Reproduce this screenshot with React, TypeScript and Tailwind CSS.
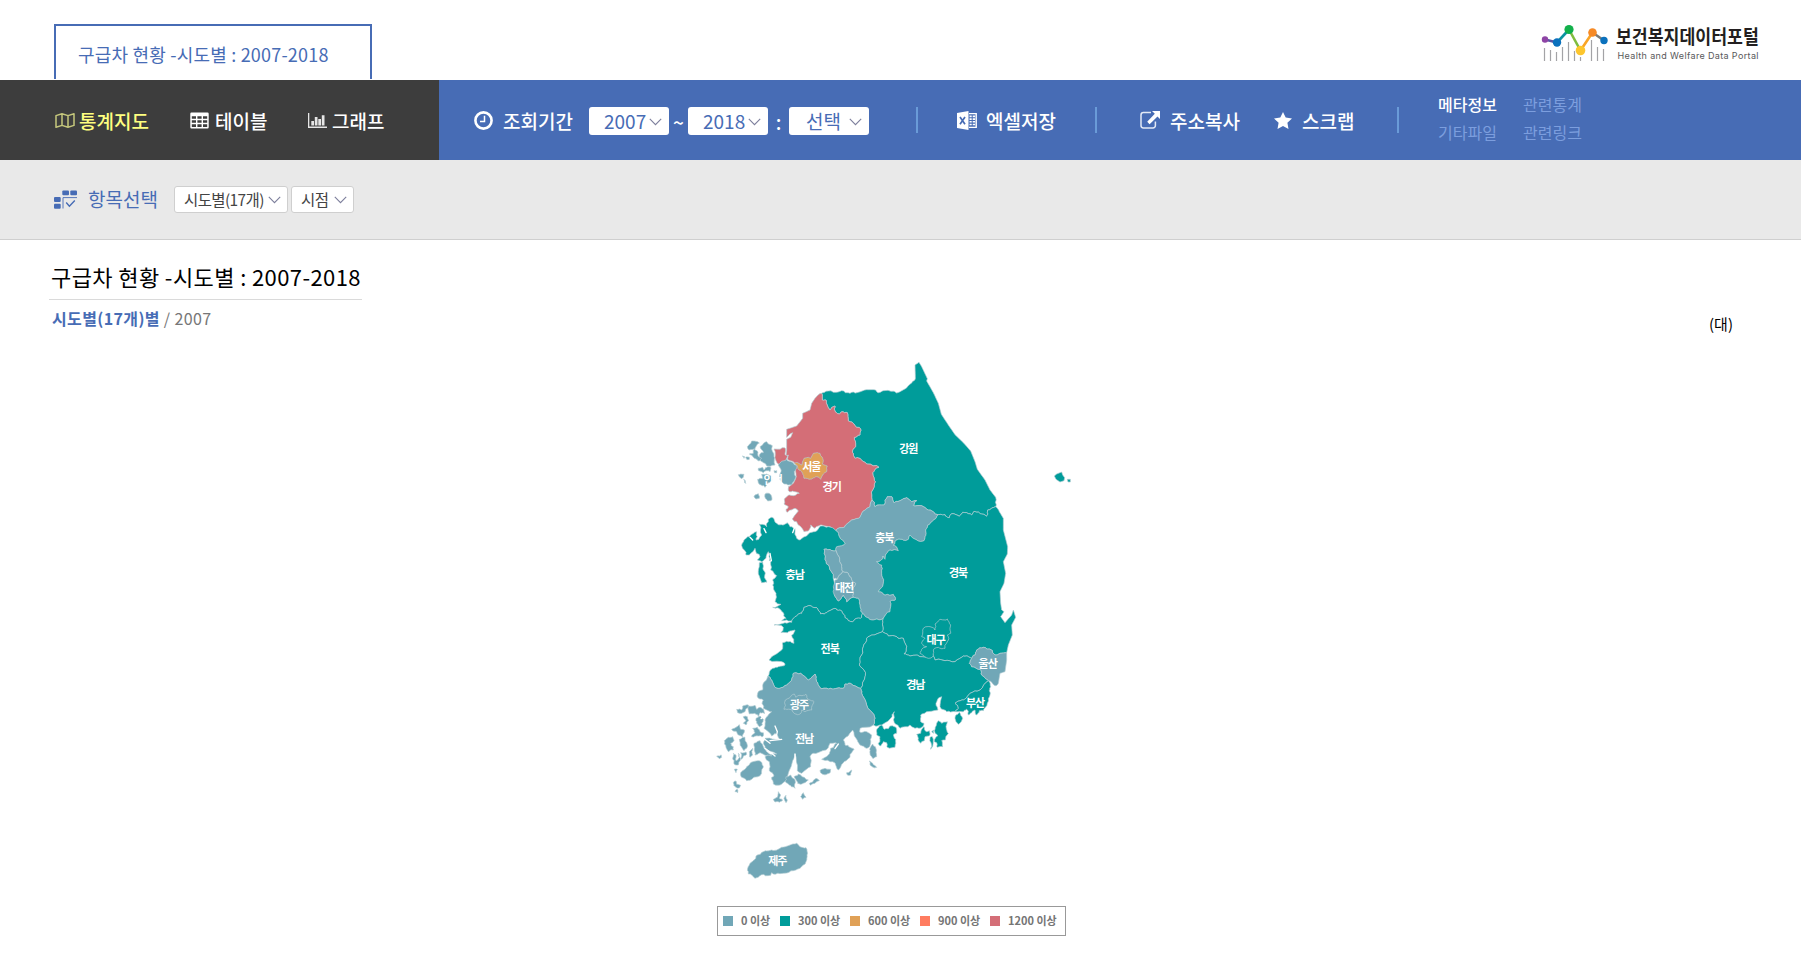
import React from 'react';

type Pt = [number, number];

const pts = (s: string): Pt[] =>
  s.trim().split(/\s+/).map((p) => p.split(',').map(Number) as Pt);
const rev = (s: string): string => s.trim().split(/\s+/).reverse().join(' ');

/* Pseudo-random value that is the same for an edge in either direction. */
const noise = (a: Pt, b: Pt, k: number): number => {
  const v = Math.sin((a[0] + b[0]) * 12.9898 + (a[1] + b[1]) * 78.233 + k * 37.7) * 43758.5453;
  return v - Math.floor(v) - 0.5;
};

/* Splits an edge and shifts its middle to give a rough coastline. */
const split = (a: Pt, b: Pt, depth: number): Pt[] => {
  const len = Math.hypot(b[0] - a[0], b[1] - a[1]);
  if (depth === 0 || len < 7) return [a];
  const mx = (a[0] + b[0]) / 2;
  const my = (a[1] + b[1]) / 2;
  /* The east coast and the north-west shore of Gyeonggi are even. */
  const even = (mx > 640 && my < 445 && mx - 640 > (my - 60) * 0.5) || mx > 895 || (mx < 350 && my < 325 && mx > 258);
  const amp = even ? 0 : Math.min(len * 0.35, 6);
  const m: Pt = [mx + noise(a, b, 1) * amp, my + noise(a, b, 2) * amp];
  return [...split(a, m, depth - 1), ...split(m, b, depth - 1)];
};

const outline = (s: string, rough: boolean): string => {
  const p = pts(s);
  const out = p.flatMap((a, i) => (rough ? split(a, p[(i + 1) % p.length], 2) : [a]));
  return 'M' + out.map(([x, y]) => `${x.toFixed(1)},${y.toFixed(1)}`).join('L') + 'Z';
};

const BLUE = '#71a7b7';
const TEAL = '#009c9a';
const AMBER = '#e0a157';
const CORAL = '#ff7c60';
const ROSE = '#d46e77';

/* Borders shared by two provinces */
const ggGw =
  '365,130 367,150 378,150 382,165 390,180 405,168 405,183 418,192 425,185 442,188 445,213 462,222 482,237 480,255 463,262 467,290 458,300 465,325 480,325 500,342 537,352 518,368 526,395 518,420 516,450';
const ggCb = '516,450 510,470 485,490 480,502 455,510 437,525 425,533 408,542';
const cbGw =
  '516,450 525,470 552,465 555,450 562,440 575,440 582,458 600,452 620,443 635,455 650,452 640,466 665,467 685,480 715,494';
const gbGw =
  '715,494 735,494 748,503 756,491 768,494 778,499 788,487 805,491 815,495 822,484 835,486 845,492 860,499 863,480 875,474 888,470';
const cbGb =
  '715,494 708,505 690,520 680,535 675,560 672,572 655,573 630,555 625,568 600,568 585,575 580,585 595,602 570,600 558,612 555,628 548,618 544,630 530,635 545,645 545,670 550,700 535,725 555,735 580,733 586,750 570,755 570,785 550,805';
const cnEast =
  '408,542 418,560 435,580 410,590 408,602 390,598 372,598 375,628 388,650 400,685 403,735 415,753 425,742 430,735 440,755 460,742 475,745 480,770 487,790';
const cnJb =
  '487,790 485,802 470,805 458,815 445,812 430,792 420,780 405,775 380,788 362,792 350,773 330,767 312,772 305,790 285,800 275,813';
const jbGn =
  '548,845 520,855 500,865 490,890 485,915 478,945 492,960 495,980 482,1015';
const jbJn =
  '482,1015 455,1002 435,1002 430,1015 400,1017 385,1017 362,1015 350,995 345,972 325,990 302,970 280,970 275,990 260,1005 240,1015 225,1012 215,990 203,980';
const gnGb =
  '815,925 805,920 790,918 765,935 735,932 705,930 698,912 690,920 660,920 625,915 612,912 620,890 610,865 590,860 565,858 548,845';
const gbUs = '920,908 900,910 885,915 875,900 850,892 830,900 825,915 815,925';
const usGn = '815,925 808,940 815,950 840,958 845,975 865,992';
const gnBs = '865,992 840,1020 810,1030 790,1050 765,1060 775,1075 765,1085';
const jnGn = '482,1015 485,1030 500,1065 525,1105 520,1125';

const regions: { c: string; p: string; smooth?: boolean }[] = [
  {
    c: TEAL,
    p: `${rev(ggGw)} 385,123 400,127 425,122 450,130 475,127 500,119 527,120 535,128 550,122 590,129 625,107 642,92 646,80 645,45 657,37 665,50 682,86 680,93 700,128 715,160 724,193 745,225 765,254 790,278 812,303 825,335 832,358 855,390 870,420 887,442 ${rev(gbGw)} ${rev(cbGw)}`,
  },
  {
    c: ROSE,
    p: `${ggGw} ${ggCb} 390,530 365,525 345,535 332,525 325,543 312,545 295,525 290,515 277,507 295,483 285,475 262,487 258,478 265,470 252,462 253,447 268,435 280,437 298,430 285,425 268,425 265,410 280,400 288,375 283,352 290,345 280,335 262,328 265,315 258,318 260,300 260,268 272,262 278,248 270,252 260,262 260,238 290,228 308,205 308,190 330,180 335,160 345,145`,
  },
  { c: ROSE, p: '222,297 253,293 257,300 255,314 263,318 258,330 238,344 228,332' },
  {
    c: BLUE,
    p: `${rev(ggCb)} ${cbGw} ${cbGb} 520,810 500,802 487,790 480,770 475,745 460,742 458,720 467,700 455,690 445,670 428,665 425,645 408,602 410,590 435,580 418,560`,
  },
  {
    c: TEAL,
    p: `${cnEast} ${cnJb} 245,812 258,805 250,788 240,778 218,772 243,763 225,755 228,730 218,705 218,690 230,677 212,660 215,630 208,632 205,605 198,625 185,635 172,630 180,620 165,595 150,613 138,615 135,603 127,593 132,570 148,560 170,545 168,570 185,555 178,522 200,530 205,508 215,502 230,520 248,525 262,518 270,530 285,535 290,565 300,570 325,552 345,545 362,528 385,530`,
  },
  { c: TEAL, p: '178,638 188,636 190,650 194,665 198,690 200,697 185,698 175,672' },
  {
    c: TEAL,
    p: `${rev(cnJb)} 500,802 520,810 550,805 548,825 548,845 ${jbGn} ${jbJn} 218,955 235,950 255,945 250,937 207,930 215,920 245,900 248,878 260,874 282,880 275,855 285,840 262,848 243,848 250,832 222,825 250,820 275,817`,
  },
  {
    c: TEAL,
    p: `${gbGw} 898,485 910,505 910,540 923,590 922,612 910,635 917,670 912,700 900,725 902,760 905,780 912,785 902,800 915,818 935,795 940,780 947,802 935,825 937,855 925,885 ${gbUs} ${gnGb} 548,825 ${rev(cbGb)}`,
  },
  {
    c: TEAL,
    p: `${usGn} ${gnBs} 740,1085 720,1070 725,1040 712,1050 708,1060 714,1080 680,1085 662,1095 662,1115 672,1120 668,1130 645,1135 630,1125 600,1135 583,1118 583,1085 572,1105 545,1125 520,1125 ${rev(jnGn)} ${rev(jbGn)} ${rev(gnGb)}`,
  },
  { c: TEAL, p: `${gnBs} 790,1085 800,1078 805,1095 815,1088 825,1080 830,1095 838,1082 850,1082 862,1060 870,1035 868,1022 872,1010` },
  { c: BLUE, p: `${gbUs} ${usGn} 885,1007 895,1000 900,970 915,965 920,930` },
  {
    c: BLUE,
    p: `${rev(jbJn)} ${jnGn} 480,1135 479,1146 500,1145 515,1155 512,1180 500,1195 480,1185 468,1165 458,1140 430,1170 435,1185 450,1192 462,1198 450,1222 430,1238 415,1260 398,1235 365,1228 385,1215 392,1195 410,1180 390,1180 378,1200 340,1210 330,1220 332,1250 305,1270 292,1262 285,1212 278,1232 262,1290 240,1305 220,1302 215,1282 222,1275 208,1262 208,1235 195,1220 230,1212 200,1200 190,1180 195,1165 240,1168 225,1150 215,1158 192,1135 195,1110 215,1085 190,1075 186,1060 190,1050 172,1040 180,1022 188,1020 190,1000`,
  },
  // Metropolitan cities
  { c: AMBER, p: '283,340 293,338 305,345 312,325 325,322 332,325 340,310 360,310 368,325 367,342 382,348 380,365 370,372 362,388 350,380 335,387 312,385 308,370 297,360' },
  { c: BLUE, p: '235,345 260,328 280,338 290,352 283,365 288,380 275,405 262,404 248,398 240,385 243,365' },
  { c: BLUE, p: '372,598 390,598 408,602 425,645 428,665 412,688 400,685 388,650 375,628' },
  { c: BLUE, p: '405,690 412,688 428,665 445,670 455,690 467,700 458,720 460,742 440,755 430,735 425,742 415,753 403,735 400,710' },
  { c: TEAL, p: '665,860 670,835 690,830 705,840 705,822 720,808 742,807 752,825 752,850 742,855 745,870 735,895 715,892 700,900 698,920 685,925 660,910 665,898 680,890 665,880 675,865' },
  { c: BLUE, p: '256,1050 272,1040 283,1032 288,1042 300,1036 318,1033 325,1048 342,1055 335,1080 315,1085 305,1080 300,1092 285,1092 270,1078 252,1078' },
  // Jeju
  { c: BLUE, p: '143,1555 150,1540 165,1528 168,1518 190,1505 215,1500 240,1495 265,1487 290,1480 305,1492 318,1493 321,1515 318,1535 300,1555 280,1562 250,1570 220,1572 215,1568 212,1576 185,1574 165,1585 155,1575 145,1572' },
  // Incheon islands
  { c: BLUE, p: '180,290 200,275 205,282 217,287 222,320 225,345 200,348 190,338 178,325 178,315 190,308' },
  { c: BLUE, p: '142,290 155,273 178,279 165,297 147,300' },
  { c: BLUE, p: '163,297 172,303 174,318 185,325 178,333 163,325 148,312 160,310' },
  { c: BLUE, p: '137,322 148,322 148,328 140,328' },
  { c: BLUE, p: '127,318 134,320 132,325' },
  { c: BLUE, p: '175,355 188,352 192,360 203,350 213,353 210,365 198,362 190,368 176,362' },
  { c: BLUE, p: '173,388 188,385 185,373 200,372 215,378 215,392 205,398 195,412 183,405 175,398' },
  { c: BLUE, p: '222,362 230,362 230,368 224,368' },
  { c: BLUE, p: '115,374 132,373 130,382 124,386 118,380' },
  { c: BLUE, p: '131,388 136,392 138,400 134,398' },
  { c: BLUE, p: '162,440 175,431 178,445 168,447' },
  { c: BLUE, p: '195,432 207,430 215,440 213,452 203,453 196,445' },
  // Ulleungdo and Dokdo
  { c: TEAL, p: '1063,378 1070,372 1085,366 1088,375 1094,383 1092,392 1080,396 1068,388', smooth: true },
  { c: TEAL, p: '1102,388 1111,388 1111,396 1104,396', smooth: true },
  // South-east islands
  { c: TEAL, p: '530,1140 545,1125 553,1138 565,1136 570,1128 588,1132 590,1150 580,1155 587,1168 585,1192 562,1192 560,1178 550,1175 542,1188 535,1180 540,1160 530,1155' },
  { c: TEAL, p: '650,1153 662,1150 672,1130 680,1145 688,1142 690,1155 675,1160 673,1172 662,1180 655,1165' },
  { c: TEAL, p: '705,1138 715,1112 725,1120 742,1115 738,1130 745,1150 736,1170 725,1172 728,1190 712,1192 710,1178 703,1175 713,1158 705,1150' },
  { c: TEAL, p: '690,1162 697,1160 698,1190 692,1198 693,1178' },
  { c: TEAL, p: '766,1098 778,1087 788,1105 775,1123 768,1115' },
  { c: TEAL, p: '695,1145 702,1140 701,1150' },
  // South-west islands
  { c: BLUE, p: '122,1268 140,1250 150,1240 175,1232 186,1238 190,1250 185,1270 155,1288 140,1292 125,1282' },
  { c: BLUE, p: '162,1180 180,1172 190,1190 200,1205 215,1218 195,1216 180,1208 165,1215 163,1196' },
  { c: BLUE, p: '110,1078 125,1080 128,1068 145,1065 150,1072 138,1076 135,1085 125,1090 113,1088' },
  { c: BLUE, p: '145,1068 165,1066 170,1078 180,1072 192,1083 195,1090 180,1088 175,1100 165,1090 148,1092' },
  { c: BLUE, p: '130,1100 142,1100 146,1112 138,1125 130,1120 138,1112' },
  { c: BLUE, p: '168,1105 180,1098 190,1108 187,1125 178,1130 170,1120' },
  { c: BLUE, p: '95,1138 108,1132 118,1124 122,1138 133,1140 128,1160 115,1155 110,1145' },
  { c: BLUE, p: '158,1135 172,1132 180,1145 190,1148 188,1160 175,1158 155,1160 165,1148' },
  { c: BLUE, p: '118,1168 135,1162 140,1178 142,1190 132,1202 124,1190' },
  { c: BLUE, p: '73,1172 85,1162 98,1160 102,1172 92,1180 100,1190 100,1200 85,1205 78,1192' },
  { c: BLUE, p: '50,1219 64,1215 65,1222 58,1226' },
  { c: BLUE, p: '100,1210 108,1215 108,1232 118,1222 115,1210 122,1225 115,1245 102,1242 98,1225' },
  { c: BLUE, p: '122,1208 138,1206 140,1213 130,1218 124,1228' },
  { c: BLUE, p: '148,1205 158,1195 158,1215 150,1222' },
  { c: BLUE, p: '103,1258 112,1258 108,1268' },
  { c: BLUE, p: '100,1298 108,1293 110,1303 122,1306 118,1314 108,1312' },
  { c: BLUE, p: '105,1325 112,1318 113,1328' },
  { c: BLUE, p: '258,1280 272,1275 285,1290 285,1315 268,1305 256,1295' },
  { c: BLUE, p: '282,1280 295,1272 312,1282 325,1290 315,1298 300,1303 290,1293' },
  { c: BLUE, p: '328,1300 338,1296 348,1285 358,1292 345,1300 332,1306' },
  { c: BLUE, p: '360,1262 375,1255 392,1258 388,1270 368,1273' },
  { c: BLUE, p: '440,1268 455,1260 452,1275 444,1276' },
  { c: BLUE, p: '220,1348 232,1342 235,1325 242,1335 238,1345 248,1350 238,1357 225,1356' },
  { c: BLUE, p: '252,1345 258,1336 262,1350 258,1358' },
  { c: BLUE, p: '302,1340 310,1328 318,1342 308,1348' },
  { c: BLUE, p: '510,1195 518,1182 526,1190 530,1220 518,1225 510,1210' },
  { c: BLUE, p: '508,1233 518,1240 530,1252 518,1251 510,1243' },
];

const labels: [string, number, number][] = [
  ['강원', 626, 297], ['경기', 396, 411], ['서울', 335, 351], ['인천', 219, 389],
  ['충북', 554, 564], ['충남', 285, 673], ['대전', 433, 714], ['경북', 775, 667],
  ['전북', 390, 897], ['대구', 708, 869], ['울산', 864, 942], ['경남', 647, 1004],
  ['부산', 826, 1059], ['광주', 298, 1065], ['전남', 313, 1165], ['제주', 233, 1533],
];

const KoreaMap = () => (
  <svg viewBox="0 0 1200 1620" className="ml-[700px] block h-[540px] w-[400px]">
    {regions.map((r, i) => (
      <path key={i} d={outline(r.p, !r.smooth)} fill={r.c} stroke="#b4cdd3" strokeWidth="2" strokeLinejoin="round" />
    ))}
    {/* Inlets */}
    <g stroke="#fff" strokeWidth="4" fill="none" strokeLinecap="round">
      <path d="M225 1128L232 1145L228 1165M210 1172L245 1168" />
      <path d="M190 1165L210 1180M195 1195L225 1218" />
      <path d="M284 532L278 548M192 536L198 548M150 562L158 570M214 632L210 610" />
      <path d="M183 1106L192 1098M462 1165L456 1188M415 1182L405 1196M285 1212L286 1250" />
    </g>
    {labels.map(([t, x, y]) => (
      <text key={t} x={x - 1} y={y + 13} textAnchor="middle" fill="#fff" fontSize="33" fontWeight="700" letterSpacing="-3">
        {t}
      </text>
    ))}
  </svg>
);

const Chevron = ({ className = '' }: { className?: string }) => (
  <svg viewBox="0 0 13 8" className={`h-2 w-[13px] shrink-0 ${className}`} fill="none" stroke="#7d7f9c" strokeWidth="1.1">
    <path d="M0.8 0.8L6.5 6.6L12.2 0.8" />
  </svg>
);

const MapIcon = () => (
  <svg viewBox="0 0 20 15" className="h-[15px] w-5" fill="none" stroke="#c5c77c" strokeWidth="1.5" strokeLinejoin="round">
    <path d="M1 2.6L7 0.8L13 2.6L19 0.8V12.4L13 14.2L7 12.4L1 14.2ZM7 0.8V12.4M13 2.6V14.2" />
  </svg>
);

const TableIcon = () => (
  <svg viewBox="0 0 19 17" className="h-[17px] w-[19px]">
    <path
      fill="#fff"
      fillRule="evenodd"
      d="M1.5 0.5h16a1.2 1.2 0 0 1 1.2 1.2v13.6a1.2 1.2 0 0 1-1.2 1.2h-16a1.2 1.2 0 0 1-1.2-1.2V1.7A1.2 1.2 0 0 1 1.5 0.5ZM1.8 4.2v2.6h4.2V4.2ZM7.4 4.2v2.6h4.2V4.2ZM13 4.2v2.6h4.2V4.2ZM1.8 8.2v2.6h4.2V8.2ZM7.4 8.2v2.6h4.2V8.2ZM13 8.2v2.6h4.2V8.2ZM1.8 12.2v2.8h4.2V12.2ZM7.4 12.2v2.8h4.2V12.2ZM13 12.2v2.8h4.2V12.2Z"
    />
  </svg>
);

const ChartIcon = () => (
  <svg viewBox="0 0 19 15" className="h-[15px] w-[19px]" fill="#e6e6e6">
    <path d="M0 0h1.300v13.600H19V15H0ZM3.300 8h2.700v4.400H3.300ZM6.800 4h2.700v8.400H6.800ZM10.300 6H13v6.400h-2.700ZM13.800 2.200h2.700v10.200h-2.700Z" />
  </svg>
);

const ClockIcon = () => (
  <svg viewBox="0 0 19 19" className="h-[19px] w-[19px]" fill="none" stroke="#fff">
    <circle cx="9.5" cy="9.5" r="8.1" strokeWidth="2.6" />
    <path d="M10.5 4.8V10.4H6" strokeWidth="1.5" />
  </svg>
);

const ExcelIcon = () => (
  <svg viewBox="0 0 20 19" className="h-[19px] w-5">
    <path d="M0 2L11.5 0V19L0 17Z" fill="#fff" />
    <path d="M3 6L8 13.2M8 6L3 13.2" stroke="#476cb5" strokeWidth="1.7" />
    <path d="M12 2.6H19.2V16.4H12" fill="none" stroke="#fff" strokeWidth="1.4" />
    <path d="M12.5 5.4h2.200M12.5 8.100h2.200M12.5 10.800h2.200M12.5 13.500h2.200M15.700 5.400h2.400M15.700 8.100h2.400M15.700 10.800h2.400M15.700 13.500h2.400" stroke="#fff" strokeWidth="1.6" />
  </svg>
);

const ShareIcon = () => (
  <svg viewBox="0 0 20 18" className="h-[18px] w-5">
    <path d="M11 1.600H3.400A2.400 2.400 0 0 0 1 4V14.600A2.400 2.400 0 0 0 3.400 17H13A2.400 2.400 0 0 0 15.400 14.600V10.500" fill="none" stroke="#e3e9f5" strokeWidth="1.5" />
    <path d="M12 0H20V8L17.500 5.500L9.600 13.200L7.200 10.800L14.800 2.800Z" fill="#fff" />
  </svg>
);

const StarIcon = () => (
  <svg viewBox="0 0 18 17" className="h-[17px] w-[18px]" fill="#fff">
    <path d="M9 0L11.700 5.600L18 6.400L13.400 10.700L14.500 17L9 14L3.500 17L4.600 10.700L0 6.400L6.300 5.600Z" />
  </svg>
);

const ItemsIcon = () => (
  <svg viewBox="0 0 24 19" className="h-[19px] w-6" fill="#476cb5">
    <rect x="8.300" y="0.500" width="6.700" height="4.800" rx="1" />
    <rect x="16.300" y="0.500" width="6.700" height="4.800" rx="1" />
    <rect x="0" y="7" width="6.700" height="5" rx="1" />
    <rect x="0" y="13.700" width="6.700" height="5" rx="1" />
    <path d="M9 18.500V7.600H23" fill="none" stroke="#476cb5" strokeWidth="0.900" />
    <path d="M12.200 12.500L15.400 16.200L20.800 10.400" fill="none" stroke="#476cb5" strokeWidth="1.400" />
  </svg>
);

const Logo = () => (
  <svg viewBox="0 0 224 44" className="mr-[37px] mt-[20px] h-[44px] w-[224px] overflow-visible">
    <g transform="translate(0 4)">
      <g stroke="#a3a3a6" strokeWidth="1.200">
        <path d="M4.500 24V37M10.500 26V37M16.500 28V37M22.500 23V37M28.500 18V37M34.500 27V37M40.500 33V37M51.500 16V37M57.500 23V37M63.500 25V37" />
      </g>
      <g strokeWidth="2.600" fill="none">
        <path d="M5 15.500L17 18.500" stroke="#5a57a5" />
        <path d="M17 18.500L29 5.500" stroke="#0b93a0" />
        <path d="M29 5.500L40.500 26.500" stroke="#7fbc3e" />
        <path d="M40.500 26.500L52.500 8.500" stroke="#f9a526" />
        <path d="M52.500 8.500L64 16.500" stroke="#7b7b78" />
      </g>
      <circle cx="5" cy="15.500" r="3.200" fill="#8e44a5" />
      <circle cx="17" cy="18.500" r="4.200" fill="#0b71bd" />
      <circle cx="29" cy="5.500" r="4.600" fill="#12b04b" />
      <circle cx="40.500" cy="26.500" r="4.800" fill="#fdc62d" />
      <circle cx="52.500" cy="8.500" r="4.300" fill="#f68a26" />
      <circle cx="64" cy="16.500" r="3.700" fill="#0b71bd" />
      <text transform="translate(76 19.5) scale(0.885 1)" fontSize="19.500" fontWeight="700" fill="#231f20">보건복지데이터포털</text>
      <text x="77.500" y="35" fontSize="9" fill="#58585a" textLength="141" style={{ fontFamily: 'Inter, sans-serif' }}>Health and Welfare Data Portal</text>
    </g>
  </svg>
);

const Picker = ({ children, pad }: { children: React.ReactNode; pad: string }) => (
  <button className={`flex h-7 w-20 items-center justify-between rounded-[3px] bg-white pr-[7px] ${pad} text-[19px] leading-7 text-[#476cb5]`}>
    {children}
    <Chevron className="mt-0.5" />
  </button>
);

const legend: [string, string, string][] = [
  [BLUE, '0 이상', 'w-[57px]'],
  [TEAL, '300 이상', 'w-[70px]'],
  [AMBER, '600 이상', 'w-[70px]'],
  [CORAL, '900 이상', 'w-[70px]'],
  [ROSE, '1200 이상', 'w-[76px]'],
];

export default function App() {
  return (
    <div className="h-[954px] w-[1801px] overflow-hidden whitespace-nowrap bg-white font-['Noto_Sans_CJK_KR',sans-serif] text-black">
      <header className="flex h-20 justify-between">
        <div className="ml-[54px] mt-6 h-[55px] w-[318px] border-2 border-b-0 border-[#476cb5] pl-[22px] text-[18px] leading-[57px] tracking-[0.2px] text-[#476cb5]">
          구급차 현황 -시도별 : 2007-2018
        </div>
        <Logo />
      </header>

      <nav className="flex h-20 text-[19px] font-medium leading-none text-white">
        <div className="flex w-[439px] items-center bg-[#3d3d3d] pl-[55px]">
          <a className="flex w-[135px] items-center gap-1 text-[#ffff80]"><MapIcon />통계지도</a>
          <a className="flex w-[118px] items-center gap-[6px]"><TableIcon />테이블</a>
          <a className="flex items-center gap-[5px]"><ChartIcon />그래프</a>
        </div>
        <div className="flex flex-1 items-center bg-[#476cb5] pl-[35px]">
          <div className="flex w-[115px] items-center gap-[10px]"><ClockIcon />조회기간</div>
          <div className="flex items-center pt-0.5 font-normal">
            <Picker pad="pl-[15px]">2007</Picker>
            <span className="w-[19px] text-center font-medium">~</span>
            <Picker pad="pl-[15px]">2018</Picker>
            <span className="w-[21px] text-center font-medium">:</span>
            <Picker pad="pl-[17px]">선택</Picker>
          </div>
          <i className="ml-[47px] h-[26px] w-0.5 bg-[#6a9bd8]" />
          <div className="ml-[39px] flex w-[138px] items-center gap-[9px]"><ExcelIcon />엑셀저장</div>
          <i className="h-[26px] w-0.5 bg-[#6a9bd8]" />
          <div className="ml-[43px] flex w-[134px] items-center gap-[10px]"><ShareIcon />주소복사</div>
          <div className="flex w-[123px] items-center gap-[10px]"><StarIcon />스크랩</div>
          <i className="h-[26px] w-0.5 bg-[#6a9bd8]" />
          <div className="-mt-1 ml-[39px] grid grid-cols-[85px_auto] text-[16px] font-normal leading-7 text-[#7c9ede]">
            <span className="font-medium text-white">메타정보</span>
            <span>관련통계</span>
            <span>기타파일</span>
            <span>관련링크</span>
          </div>
        </div>
      </nav>

      <div className="flex h-20 items-center border-b border-[#cfcfcf] bg-[#e9e9e9] pl-[54px]">
        <ItemsIcon />
        <span className="ml-[10px] w-[86px] text-[19px] text-[#476cb5]">항목선택</span>
        <button className="flex h-[27px] w-[114px] items-center justify-between rounded-[3px] border border-[#cfcfcf] bg-white pl-[9px] pr-[6px] text-[15.5px] tracking-[-0.6px] text-[#444]">
          시도별(17개)<Chevron />
        </button>
        <button className="ml-[3px] flex h-[27px] w-[63px] items-center justify-between rounded-[3px] border border-[#cfcfcf] bg-white pl-[9px] pr-[6px] text-[15.5px] tracking-[-0.6px] text-[#444]">
          시점<Chevron />
        </button>
      </div>

      <main className="h-[714px]">
        <div className="flex h-[110px] justify-between">
          <div className="pl-[49px]">
            <h1 className="h-[60px] w-[313px] border-b border-[#dadada] pl-[2px] text-[22px] leading-[73px] tracking-[0.4px]">
              구급차 현황 -시도별 : 2007-2018
            </h1>
            <p className="pl-[3px] text-[16px] leading-[36px] tracking-[0.37px] text-[#777]">
              <b className="font-bold text-[#476cb5]">시도별(17개)별</b> / 2007
            </p>
          </div>
          <span className="mr-[68px] mt-[73px] text-[15px]">(대)</span>
        </div>
        <KoreaMap />
        <div className="ml-[717px] mt-4 flex h-[30px] w-[349px] items-center border border-[#999] pl-[5px] text-[11px] font-bold text-[#757575]">
          {legend.map(([color, text, width]) => (
            <span key={text} className={`flex shrink-0 items-center gap-[8px] ${width}`}>
              <i className="h-[10px] w-[10px]" style={{ backgroundColor: color }} />
              <span className="-mt-0.5">{text}</span>
            </span>
          ))}
        </div>
      </main>
    </div>
  );
}
